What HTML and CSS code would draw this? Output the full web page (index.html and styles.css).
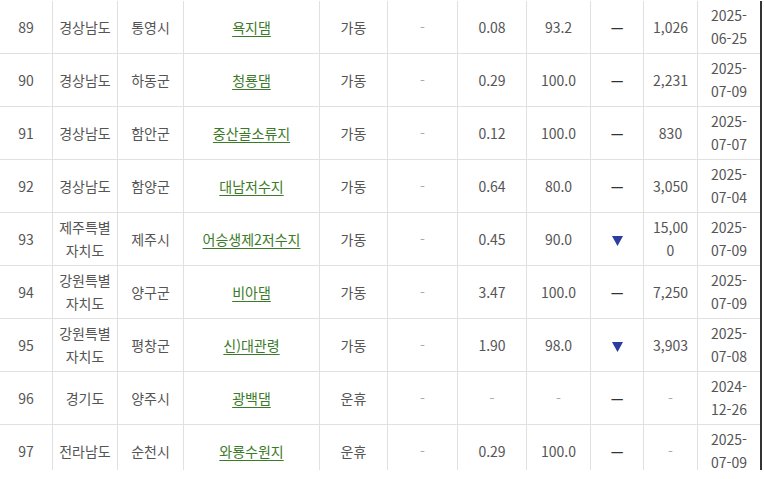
FILE: index.html
```html
<!DOCTYPE html>
<html lang="ko">
<head>
<meta charset="utf-8">
<title>저수지 현황</title>
<link rel="stylesheet" href="styles.css">
</head>
<body>
<div class="wrap">
<table class="tbl">
<colgroup>
<col class="c1"><col class="c2"><col class="c3"><col class="c4"><col class="c5"><col class="c6"><col class="c7"><col class="c8"><col class="c9"><col class="c10"><col class="c11">
</colgroup>
<tbody>
<tr><td>89</td><td>경상남도</td><td>통영시</td><td><a href="#">욕지댐</a></td><td>가동</td><td class="nil">-</td><td>0.08</td><td>93.2</td><td><span class="flat">—</span></td><td class="amt">1,026</td><td class="date">2025-06-25</td></tr>
<tr><td>90</td><td>경상남도</td><td>하동군</td><td><a href="#">청룡댐</a></td><td>가동</td><td class="nil">-</td><td>0.29</td><td>100.0</td><td><span class="flat">—</span></td><td class="amt">2,231</td><td class="date">2025-07-09</td></tr>
<tr><td>91</td><td>경상남도</td><td>함안군</td><td><a href="#">중산골소류지</a></td><td>가동</td><td class="nil">-</td><td>0.12</td><td>100.0</td><td><span class="flat">—</span></td><td class="amt">830</td><td class="date">2025-07-07</td></tr>
<tr><td>92</td><td>경상남도</td><td>함양군</td><td><a href="#">대남저수지</a></td><td>가동</td><td class="nil">-</td><td>0.64</td><td>80.0</td><td><span class="flat">—</span></td><td class="amt">3,050</td><td class="date">2025-07-04</td></tr>
<tr><td>93</td><td>제주특별자치도</td><td>제주시</td><td><a href="#">어승생제2저수지</a></td><td>가동</td><td class="nil">-</td><td>0.45</td><td>90.0</td><td><svg class="down" width="11" height="10" viewBox="0 0 11 10"><path d="M0 0H11L5.5 10Z"/></svg></td><td class="amt">15,000</td><td class="date">2025-07-09</td></tr>
<tr><td>94</td><td>강원특별자치도</td><td>양구군</td><td><a href="#">비아댐</a></td><td>가동</td><td class="nil">-</td><td>3.47</td><td>100.0</td><td><span class="flat">—</span></td><td class="amt">7,250</td><td class="date">2025-07-09</td></tr>
<tr><td>95</td><td>강원특별자치도</td><td>평창군</td><td><a href="#">신)대관령</a></td><td>가동</td><td class="nil">-</td><td>1.90</td><td>98.0</td><td><svg class="down" width="11" height="10" viewBox="0 0 11 10"><path d="M0 0H11L5.5 10Z"/></svg></td><td class="amt">3,903</td><td class="date">2025-07-08</td></tr>
<tr><td>96</td><td>경기도</td><td>양주시</td><td><a href="#">광백댐</a></td><td>운휴</td><td class="nil">-</td><td class="nil">-</td><td class="nil">-</td><td><span class="flat">—</span></td><td class="amt nil">-</td><td class="date">2024-12-26</td></tr>
<tr><td>97</td><td>전라남도</td><td>순천시</td><td><a href="#">와룡수원지</a></td><td>운휴</td><td class="nil">-</td><td>0.29</td><td>100.0</td><td><span class="flat">—</span></td><td class="amt nil">-</td><td class="date">2025-07-09</td></tr>
</tbody>
</table>
</div>
</body>
</html>
```
FILE: styles.css
```css
html, body {
  margin: 0;
  padding: 0;
  background: #fff;
  overflow: hidden;
}
body {
  padding-top: 1px;
  font-family: "Noto Sans CJK KR", "Noto Sans", sans-serif;
  font-size: 14px;
  color: #555;
}
.wrap {
  width: 760px;
  height: 469px;
  overflow: hidden;
  border-right: 2px solid #333;
}
.tbl {
  table-layout: fixed;
  width: 760px;
  border-collapse: separate;
  border-spacing: 0;
}
.c1 { width: 53px; }
.c2 { width: 65px; }
.c3 { width: 66px; }
.c4 { width: 136px; }
.c5 { width: 68px; }
.c6 { width: 70px; }
.c7 { width: 69px; }
.c8 { width: 64px; }
.c9 { width: 53px; }
.c10 { width: 54px; }
.c11 { width: 62px; }
.tbl td {
  box-sizing: border-box;
  height: 53px;
  padding: 3px 5px;
  line-height: 23px;
  text-align: center;
  vertical-align: middle;
  border-right: 1px solid #e0e0e0;
  border-bottom: 1px solid #e0e0e0;
}
.tbl td:last-child {
  border-right: none;
}
.tbl td.amt {
  padding: 3px 8px;
  word-break: break-all;
}
.tbl a {
  color: #3a7a28;
  text-decoration: underline;
  text-underline-offset: 3px;
}
.nil {
  color: #aaa;
}
.flat {
  color: #333;
  font-weight: bold;
}
.down {
  fill: #2b3d9e;
  vertical-align: middle;
}
```
